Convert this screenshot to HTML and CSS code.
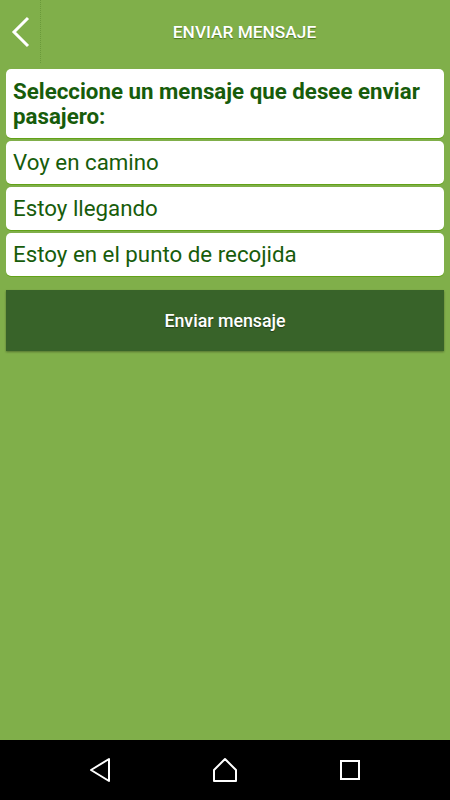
FILE: index.html
```html
<!DOCTYPE html>
<html lang="es">
<head>
    <meta charset="UTF-8">
    <meta name="viewport" content="width=device-width, initial-scale=1.0">
    <title>Enviar mensaje</title>
    <link rel="stylesheet" href="styles.css">
</head>
<body>
    <div class="screen">
        <header class="top-bar">
            <button class="back-button" aria-label="Volver">
                <svg width="22" height="32" viewBox="0 0 22 32"><polyline points="18,2 4,16 18,30" fill="none" stroke="#fff" stroke-width="3"/></svg>
            </button>
            <h1 class="title">ENVIAR MENSAJE</h1>
        </header>

        <main class="content">
            <div class="card card-header">Seleccione un mensaje que desee enviar pasajero:</div>
            <div class="card option">Voy en camino</div>
            <div class="card option">Estoy llegando</div>
            <div class="card option">Estoy en el punto de recojida</div>

            <button class="send-button">Enviar mensaje</button>
        </main>

        <nav class="nav-bar">
            <svg width="24" height="26" viewBox="0 0 24 26"><polygon points="21,2 21,24 3,13" fill="none" stroke="#fff" stroke-width="2" stroke-linejoin="round"/></svg>
            <svg width="26" height="26" viewBox="0 0 26 26"><polygon points="13,2 24,13 24,24 2,24 2,13" fill="none" stroke="#fff" stroke-width="2" stroke-linejoin="round"/></svg>
            <svg width="22" height="22" viewBox="0 0 22 22"><rect x="2" y="2" width="18" height="18" fill="none" stroke="#fff" stroke-width="2"/></svg>
        </nav>
    </div>
</body>
</html>
```

FILE: styles.css
```css
body { margin: 0; font-family: Roboto, "Noto Sans", sans-serif; background: #000; }
.screen { width: 450px; height: 800px; display: flex; flex-direction: column; background-color: #80af4a; }

.top-bar { height: 63px; display: flex; align-items: center; }
.back-button { width: 41px; height: 63px; padding: 0 0 0 10px; background: none; border: none; border-right: 1px dotted #6a9a3a; display: flex; align-items: center; box-sizing: border-box; }
.title { flex: 1; margin: 0; text-align: center; color: #fff; font-size: 17.3px; font-weight: 500; text-shadow: 0 1px 1px rgba(40, 80, 0, 0.6); padding-right: 2px; }

.content { flex: 1; padding: 6px 6px 0 6px; display: flex; flex-direction: column; gap: 3px; }
.card { background: #fff; border-radius: 5px; color: #175c0b; font-size: 22.3px; padding: 0 7px; box-shadow: 0 1px 0 #62a218; }
.card-header { font-weight: bold; line-height: 25px; padding-top: 10px; padding-bottom: 9px; }
.option { height: 43px; line-height: 42px; box-sizing: border-box; }

.send-button { margin-top: 11px; height: 61px; width: 100%; background-color: #386329; color: #fff; border: none; font-family: inherit; font-size: 17.8px; font-weight: 500; box-shadow: 0 1px 2px rgba(0, 0, 0, 0.35); text-shadow: 0 1px 1px rgba(0, 0, 0, 0.4); }

.nav-bar { height: 60px; background: #000; display: grid; grid-template-columns: repeat(3, 125px); justify-content: center; justify-items: center; align-items: center; }
```
